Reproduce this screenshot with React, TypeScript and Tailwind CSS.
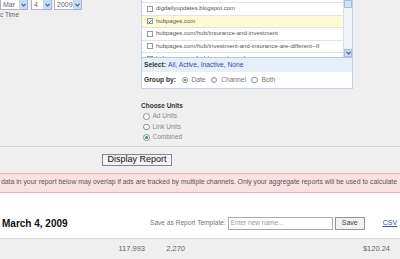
import React from "react";

const rows = [
  { label: "hubpages.com/hub/top-of-list", checked: false, hi: false },
  { label: "digdailyupdates.blogspot.com", checked: false, hi: false },
  { label: "hubpages.com", checked: true, hi: true },
  { label: "hubpages.com/hub/insurance-and-investment", checked: false, hi: false },
  { label: "hubpages.com/hub/investment-and-insurance-are-different--II", checked: false, hi: false },
  { label: "hubpages.com/hub/more-channels", checked: false, hi: false },
];

function Select({ value, w }: { value: string; w: string }) {
  return (
    <div className={`${w} flex h-[13px] items-center border border-[#a9b4c8] bg-white`}>
      <span className="flex-1 pl-[2px] pt-[3px] text-[7px] leading-none text-[#666]">{value}</span>
      <span className="flex h-full w-[8px] items-center justify-center bg-[#c9daf6] pt-[3px]">
        <svg width="5" height="4" viewBox="0 0 5 4">
          <path d="M0.5 0.8 L2.5 3 L4.5 0.8" fill="none" stroke="#2f56a5" strokeWidth="1.1" />
        </svg>
      </span>
    </div>
  );
}

function Radio({ on }: { on?: boolean }) {
  return (
    <span className="flex h-[6.5px] w-[6.5px] shrink-0 items-center justify-center rounded-full border border-[#8a8f98] bg-white">
      {on && <span className="h-[2.5px] w-[2.5px] rounded-full bg-[#2f9a2f]" />}
    </span>
  );
}

export default function App() {
  return (
    <div className="h-[259px] w-[400px] overflow-hidden bg-white font-['Liberation_Sans',Arial,sans-serif]">
      <div className="bg-[#efefef]">
        <div className="flex">
          <div className="w-[141px]">
            <div className="-mt-[3.5px] flex">
              <Select value="Mar" w="w-[28px]" />
              <div className="ml-[3px]">
                <Select value="4" w="w-[21px]" />
              </div>
              <div className="ml-[2px]">
                <Select value="2009" w="w-[28px]" />
              </div>
            </div>
            <div className="mt-[1px] text-[6.5px] leading-[8px] text-[#666]">c Time</div>
          </div>

          <div className="w-[212px] border-x border-b border-[#c3d1e8] bg-white">
            <div className="flex h-[58px] border-b border-[#b7c6e0]">
              <div className="flex-1 overflow-hidden">
                <div className="-mt-[9.5px]">
                  {rows.map((r, i) => (
                    <div
                      key={i}
                      className={`flex h-[12.5px] items-center whitespace-nowrap border-b border-[#e3e3e3] pl-[5px] ${r.hi ? "bg-[#fdfbd3]" : ""}`}
                    >
                      <span className="flex h-[6px] w-[6px] shrink-0 items-center justify-center border border-[#8d9bb3] bg-white">
                        {r.checked && (
                          <svg width="5" height="5" viewBox="0 0 5 5">
                            <path d="M0.6 2.5 L2 4 L4.5 0.8" fill="none" stroke="#27872b" strokeWidth="1.1" />
                          </svg>
                        )}
                      </span>
                      <span className="ml-[3px] text-[6px] text-[#555]">{r.label}</span>
                    </div>
                  ))}
                </div>
              </div>
              <div className="flex w-[9px] flex-col border-l border-[#d5deec] bg-[#f1f4f9]">
                <div className="h-[8px] border border-[#a9bddf] bg-[#d3e0f5]" />
                <div className="flex-1" />
                <div className="flex h-[8px] items-center justify-center border border-[#a9bddf] bg-[#c9daf6]">
                  <svg width="5" height="4" viewBox="0 0 5 4">
                    <path d="M0.5 0.8 L2.5 3 L4.5 0.8" fill="none" stroke="#2f56a5" strokeWidth="1.1" />
                  </svg>
                </div>
              </div>
            </div>
            <div className="flex h-[14px] items-center bg-[#e6eefa] pl-[2px] text-[6.7px]">
              <span className="font-bold text-[#333]">Select:</span>
              <span className="ml-[2px] text-[#3a47a8]">All, Active, Inactive, None</span>
            </div>
            <div className="flex h-[16px] items-center pl-[2px] text-[6.7px]">
              <span className="font-bold text-[#333]">Group by:</span>
              <span className="ml-[6px]"><Radio on /></span>
              <span className="ml-[3px] text-[#777]">Date</span>
              <span className="ml-[5px]"><Radio /></span>
              <span className="ml-[4px] text-[#777]">Channel</span>
              <span className="ml-[5px]"><Radio /></span>
              <span className="ml-[4px] text-[#777]">Both</span>
            </div>
          </div>
        </div>

        <div className="pl-[141px] pt-[13px] text-[6.5px]">
          <div className="h-[9px] font-bold leading-[8px] text-[#333]">Choose Units</div>
          {[
            { label: "Ad Units", on: false },
            { label: "Link Units", on: false },
            { label: "Combined", on: true },
          ].map((u) => (
            <div key={u.label} className="flex h-[10.5px] items-center pl-[2px]">
              <Radio on={u.on} />
              <span className="ml-[3px] text-[#888]">{u.label}</span>
            </div>
          ))}
        </div>

        <div className="mt-[3px] border-b border-[#d6d6d6]" />

        <div className="pl-[102px] pt-[7px] pb-[7px]">
          <div className="flex h-[12px] w-[70px] items-center justify-center border border-[#7f8794] bg-[#f3f3f3] text-[9px] text-[#111]">
            Display Report
          </div>
        </div>
      </div>

      <div className="flex h-[20px] items-start whitespace-nowrap border-y border-[#e2b4b6] bg-[#fbe1e2] pl-[1px] pt-[4px] text-[6.85px] leading-[8px] text-[#555]">
        data in your report below may overlap if ads are tracked by multiple channels. Only your aggregate reports will be used to calculate
      </div>

      <div className="mt-[23px] flex h-[15px] items-center whitespace-nowrap">
        <span className="w-[150px] pl-[2px] text-[10px] font-bold text-[#111]">March 4, 2009</span>
        <span className="text-[6.6px] text-[#777]">Save as Report Template:</span>
        <div className="ml-[2px] flex h-[13px] w-[105px] items-center border border-[#a5acb5] bg-white pl-[2px] text-[6.5px] text-[#999]">
          Enter new name...
        </div>
        <div className="ml-[2px] flex h-[13px] w-[30px] items-center justify-center border border-[#8e949c] bg-[#f2f2f2] text-[7px] text-[#444]">
          Save
        </div>
        <span className="ml-[18px] text-[7px] text-[#3a47a8] underline">CSV</span>
      </div>

      <div className="mt-[7px] flex h-[22px] items-center border-t border-[#dcdcdc] bg-[#efefef] text-[7.5px] text-[#666]">
        <span className="w-[145px] text-right">117,993</span>
        <span className="w-[40px] text-right">2,270</span>
        <span className="flex-1 pr-[10px] text-right">$120.24</span>
      </div>
    </div>
  );
}
